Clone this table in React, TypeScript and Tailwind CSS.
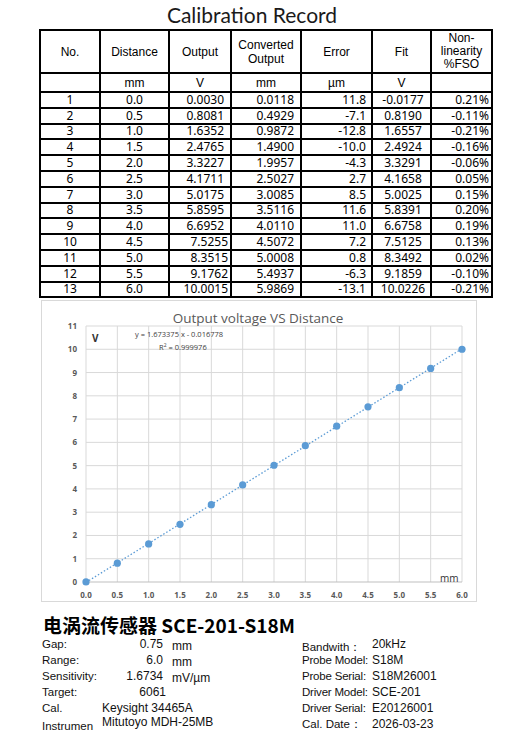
import React from 'react';

const rows: string[][] = [
  ['1', '0.0', '0.0030', '0.0118', '11.8', '-0.0177', '0.21%'],
  ['2', '0.5', '0.8081', '0.4929', '-7.1', '0.8190', '-0.11%'],
  ['3', '1.0', '1.6352', '0.9872', '-12.8', '1.6557', '-0.21%'],
  ['4', '1.5', '2.4765', '1.4900', '-10.0', '2.4924', '-0.16%'],
  ['5', '2.0', '3.3227', '1.9957', '-4.3', '3.3291', '-0.06%'],
  ['6', '2.5', '4.1711', '2.5027', '2.7', '4.1658', '0.05%'],
  ['7', '3.0', '5.0175', '3.0085', '8.5', '5.0025', '0.15%'],
  ['8', '3.5', '5.8595', '3.5116', '11.6', '5.8391', '0.20%'],
  ['9', '4.0', '6.6952', '4.0110', '11.0', '6.6758', '0.19%'],
  ['10', '4.5', '7.5255', '4.5072', '7.2', '7.5125', '0.13%'],
  ['11', '5.0', '8.3515', '5.0008', '0.8', '8.3492', '0.02%'],
  ['12', '5.5', '9.1762', '5.4937', '-6.3', '9.1859', '-0.10%'],
  ['13', '6.0', '10.0015', '5.9869', '-13.1', '10.0226', '-0.21%'],
];

const arial = { fontFamily: '"Liberation Sans", Arial, sans-serif' };
const noto = { fontFamily: '"Noto Sans", sans-serif' };

const Chart: React.FC = () => {
  const L = 44;
  const R = 420;
  const T = 25;
  const B = 281;
  const xs = (R - L) / 6;
  const ys = (B - T) / 11;
  const px = (v: number) => L + v * xs;
  const py = (v: number) => B - v * ys;
  const xticks = Array.from({ length: 13 }, (_, i) => i * 0.5);
  const yticks = Array.from({ length: 12 }, (_, i) => i);
  const pts = rows.map((r) => [parseFloat(r[1]), parseFloat(r[2])]);

  return (
    <svg width="434" height="300" style={{ fontFamily: '"Open Sans", sans-serif' }}>
      {xticks.map((t) => (
        <line key={'vx' + t} x1={px(t)} x2={px(t)} y1={T} y2={B} stroke="#d9d9d9" strokeWidth="1" />
      ))}
      {yticks.map((t) => (
        <line key={'hy' + t} x1={L} x2={R} y1={py(t)} y2={py(t)} stroke={t === 0 ? '#bfbfbf' : '#d9d9d9'} strokeWidth="1" />
      ))}
      {yticks.map((t) => (
        <text key={'ly' + t} x="35" y={py(t) + 3} fontSize="8" fontWeight="bold" fill="#595959" textAnchor="end">
          {t}
        </text>
      ))}
      {xticks.map((t) => (
        <text key={'lx' + t} x={px(t)} y="297" fontSize="8" fontWeight="bold" fill="#595959" textAnchor="middle">
          {t.toFixed(1)}
        </text>
      ))}
      <line x1={px(0)} y1={py(-0.016778)} x2={px(6)} y2={py(6 * 1.673375 - 0.016778)} stroke="#5b9bd5" strokeWidth="1.3" strokeDasharray="1.5 2" />
      {pts.map(([x, y]) => (
        <circle key={x} cx={px(x)} cy={py(y)} r="3.6" fill="#5b9bd5" />
      ))}
      <text x="216" y="22" fontSize="13.5" fill="#595959" textAnchor="middle">
        Output voltage VS Distance
      </text>
      <text x="50" y="41" fontSize="10" fontWeight="bold" fill="#333">
        V
      </text>
      <text x="93" y="36" fontSize="7.5" fill="#404040">
        y = 1.673375 x - 0.016778
      </text>
      <text x="117" y="49" fontSize="7.5" fill="#404040">
        R<tspan fontSize="5" dy="-3">2</tspan>
        <tspan dy="3"> = 0.999976</tspan>
      </text>
      <text x="398" y="281" fontSize="10" fill="#333">
        mm
      </text>
    </svg>
  );
};

export default function App() {
  const outPad = (i: number) => (i >= 9 ? 'pr-[2px]' : 'pr-[6px]');
  return (
    <div className="w-[512px] h-[748px] bg-white text-black overflow-hidden">
      <div className="h-[29px] flex items-end justify-center pr-[8px]">
        <div className="text-[21px] leading-[29px] text-[#1a1a1a]" style={{ fontFamily: 'Lato, sans-serif' }}>
          Calibration Record
        </div>
      </div>

      <table className="ml-[39px] border-collapse table-fixed w-[452px]">
        <colgroup>
          <col className="w-[60px]" />
          <col className="w-[69px]" />
          <col className="w-[62px]" />
          <col className="w-[70px]" />
          <col className="w-[71px]" />
          <col className="w-[59px]" />
          <col className="w-[61px]" />
        </colgroup>
        <thead style={arial} className="text-[12px]">
          <tr className="h-[43px]">
            {['No.', 'Distance', 'Output', 'Converted Output', 'Error', 'Fit'].map((h) => (
              <th key={h} className="border-2 border-black font-normal leading-[14px] px-1">
                {h === 'Converted Output' ? (
                  <>
                    Converted
                    <br />
                    Output
                  </>
                ) : (
                  h
                )}
              </th>
            ))}
            <th className="border-2 border-black font-normal leading-[13px] px-1">
              Non-
              <br />
              linearity
              <br />
              %FSO
            </th>
          </tr>
          <tr className="h-[19px]">
            {['', 'mm', 'V', 'mm', 'µm', 'V', ''].map((u, i) => (
              <th key={i} className="border-2 border-black font-normal leading-[14px]">
                {u}
              </th>
            ))}
          </tr>
        </thead>
        <tbody style={noto} className="text-[12px]">
          {rows.map((r, i) => (
            <tr key={r[0]} className="h-[15.8px]">
              <td className="border-2 border-black text-center leading-[12px] p-0">{r[0]}</td>
              <td className="border-2 border-black text-center leading-[12px] p-0">{r[1]}</td>
              <td className={`border-2 border-black text-right leading-[12px] p-0 ${outPad(i)}`}>{r[2]}</td>
              <td className="border-2 border-black text-right leading-[12px] p-0 pr-[6px]">{r[3]}</td>
              <td className="border-2 border-black text-right leading-[12px] p-0 pr-[5px]">{r[4]}</td>
              <td className="border-2 border-black text-center leading-[12px] p-0 pl-[3px]">{r[5]}</td>
              <td className="border-2 border-black text-right leading-[12px] p-0 pr-[2px]">{r[6]}</td>
            </tr>
          ))}
        </tbody>
      </table>

      <div className="ml-[41px] mt-[2px] w-[436px] h-[302px] border border-[#d9d9d9]">
        <Chart />
      </div>

      <div className="ml-[43px] mt-[11px] h-[23px] leading-[23px] text-[19px] font-bold text-black" style={{ fontFamily: '"Noto Sans CJK SC", sans-serif' }}>
        电涡流传感器 SCE-201-S18M
      </div>

      <div className="flex text-[#111]" style={arial}>
        <div className="ml-[42px] w-[260px] grid grid-cols-[60px_61px_auto] auto-rows-[16px] leading-[16px] text-[12px] whitespace-nowrap">
          <span className="text-[11.5px]">Gap:</span>
          <span className="text-right">0.75</span>
          <span className="pl-[9px] pt-[2px]">mm</span>
          <span className="text-[11.5px]">Range:</span>
          <span className="text-right">6.0</span>
          <span className="pl-[9px] pt-[2px]">mm</span>
          <span className="text-[11.5px]">Sensitivity:</span>
          <span className="text-right">1.6734</span>
          <span className="pl-[9px] pt-[2px]">mV/µm</span>
          <span className="text-[11.5px]">Target:</span>
          <span className="text-right -mr-[3px]">6061</span>
          <span />
          <span className="text-[11.5px]">Cal.</span>
          <span className="col-span-2">Keysight 34465A</span>
          <span className="text-[11.5px] pt-[2px]">Instrumen</span>
          <span className="col-span-2 -mt-[2px]">Mitutoyo MDH-25MB</span>
        </div>
        <div className="grid grid-cols-[70px_auto] auto-rows-[16px] leading-[16px] text-[12px] whitespace-nowrap">
          <span className="pt-[3px] text-[11.5px]">Bandwith：</span>
          <span>20kHz</span>
          <span className="text-[11.5px] tracking-[-0.2px]">Probe Model:</span>
          <span>S18M</span>
          <span className="text-[11.5px] tracking-[-0.2px]">Probe Serial:</span>
          <span>S18M26001</span>
          <span className="text-[11.5px] tracking-[-0.2px]">Driver Model:</span>
          <span>SCE-201</span>
          <span className="text-[11.5px] tracking-[-0.2px]">Driver Serial:</span>
          <span>E20126001</span>
          <span className="text-[11.5px]">Cal. Date：</span>
          <span>2026-03-23</span>
        </div>
      </div>
    </div>
  );
}
